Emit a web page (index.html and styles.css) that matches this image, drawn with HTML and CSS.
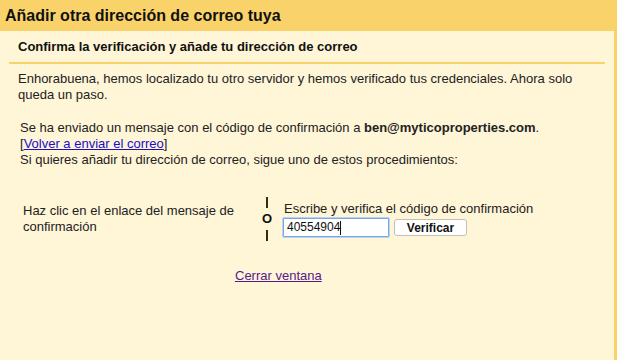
FILE: index.html
```html
<!DOCTYPE html>
<html lang="es">
<head>
    <meta charset="UTF-8">
    <meta name="viewport" content="width=device-width, initial-scale=1.0">
    <title>Añadir otra dirección de correo tuya</title>
    <link rel="stylesheet" href="styles.css">
</head>
<body>
    <div class="page">
        <h1 class="title">Añadir otra dirección de correo tuya</h1>
        <div class="panel">
            <h2 class="subtitle">Confirma la verificación y añade tu dirección de correo</h2>
            <p class="intro">Enhorabuena, hemos localizado tu otro servidor y hemos verificado tus credenciales. Ahora solo queda un paso.</p>
            <p class="sent">
                Se ha enviado un mensaje con el código de confirmación a <b>ben@myticoproperties.com</b>.<br>
                [<a href="#" class="resend">Volver a enviar el correo</a>]<br>
                Si quieres añadir tu dirección de correo, sigue uno de estos procedimientos:
            </p>
            <div class="options">
                <div class="option-left">Haz clic en el enlace del mensaje de confirmación</div>
                <div class="divider">
                    <span class="bar"></span>
                    <span class="or">O</span>
                    <span class="bar"></span>
                </div>
                <div class="option-right">
                    <label for="code">Escribe y verifica el código de confirmación</label>
                    <div class="code-row">
                        <div class="code-field" id="code"><span>40554904</span><span class="caret"></span></div>
                        <button class="verify">Verificar</button>
                    </div>
                </div>
            </div>
            <div class="close-row"><a href="#" class="close-link">Cerrar ventana</a></div>
        </div>
    </div>
</body>
</html>
```

FILE: styles.css
```css
body {
    margin: 0;
    font-family: "Liberation Sans", Arial, sans-serif;
    font-size: 13px;
    line-height: 16px;
    color: #222;
    background-color: #fff5d7;
}
.page {
    min-height: 360px;
    box-sizing: border-box;
    border-right: 3px solid #f9d26a;
    background-color: #fff5d7;
}
.title {
    margin: 0;
    height: 31px;
    padding-left: 5px;
    background-color: #f9d26a;
    font-size: 16px;
    line-height: 31px;
    font-weight: bold;
    color: #111;
}
.panel {
    margin: 0 9px;
}
.subtitle {
    margin: 0;
    padding: 8px 9px 7px;
    font-size: 13px;
    line-height: 16px;
    font-weight: bold;
    color: #111;
    border-bottom: 2px solid #f9d26a;
}
.intro {
    margin: 7px 0 0;
    padding-left: 9px;
    padding-right: 20px;
}
.sent {
    margin: 17px 0 0;
    padding-left: 11px;
}
.resend {
    color: #1a0dcc;
}
.options {
    display: flex;
    align-items: center;
    margin-top: 29px;
    padding-left: 14px;
}
.option-left {
    width: 228px;
}
.divider {
    width: 32px;
    display: flex;
    flex-direction: column;
    align-items: center;
}
.bar {
    width: 2px;
    height: 11px;
    background-color: #3a2a10;
}
.or {
    font-weight: bold;
    line-height: 22px;
    color: #111;
}
.option-right label {
    display: block;
    padding-left: 1px;
}
.code-row {
    display: flex;
    align-items: center;
    margin-top: 1px;
}
.code-field {
    width: 101px;
    height: 17px;
    border: 1px solid #7aa6e4;
    box-shadow: 0 0 0 1px #b9d3f5;
    border-radius: 1px;
    background: white;
    font-size: 12px;
    line-height: 17px;
    padding-left: 3px;
    display: flex;
    align-items: center;
    color: #111;
}
.caret {
    width: 1px;
    height: 14px;
    background: #111;
}
.verify {
    margin-left: 5px;
    width: 73px;
    height: 17px;
    padding: 0;
    border: 1px solid #c4c0b4;
    border-radius: 3px;
    background: white;
    font-family: "Liberation Sans", Arial, sans-serif;
    font-size: 12px;
    font-weight: bold;
    color: #111;
}
.close-row {
    margin-top: 27px;
    padding-left: 226px;
}
.close-link {
    color: #551a8b;
}
```
